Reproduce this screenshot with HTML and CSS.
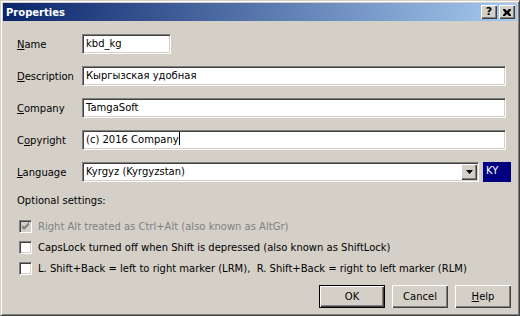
FILE: index.html
```html
<!DOCTYPE html>
<html lang="en">
<head>
    <meta charset="UTF-8">
    <title>Properties</title>
    <link rel="stylesheet" href="styles.css">
</head>
<body>

    <div class="window">
        <div class="titlebar">
            <span class="title">Properties</span>
            <div class="title-buttons">
                <span class="tbtn help-btn">?</span>
                <span class="tbtn close-btn">
                    <svg width="8" height="7" viewBox="0 0 8 7">
                        <path d="M0 0h2l2 2l2 -2h2v1l-2 2.5l2 2.5v1h-2l-2 -2l-2 2h-2v-1l2 -2.5l-2 -2.5z" fill="#000"/>
                    </svg>
                </span>
            </div>
        </div>

        <div class="content">
            <div class="row">
                <span class="lbl"><u>N</u>ame</span>
                <div class="field name-field">kbd_kg</div>
            </div>
            <div class="row">
                <span class="lbl"><u>D</u>escription</span>
                <div class="field">Кыргызская удобная</div>
            </div>
            <div class="row">
                <span class="lbl"><u>C</u>ompany</span>
                <div class="field">TamgaSoft</div>
            </div>
            <div class="row">
                <span class="lbl">C<u>o</u>pyright</span>
                <div class="field">(c) 2016 Company<span class="caret"></span></div>
            </div>
            <div class="row">
                <span class="lbl"><u>L</u>anguage</span>
                <div class="combo">
                    <span class="combo-text">Kyrgyz (Kyrgyzstan)</span>
                    <span class="combo-btn">
                        <svg width="7" height="4" viewBox="0 0 7 4"><path d="M0 0h7l-3.5 4z" fill="#000"/></svg>
                    </span>
                </div>
                <span class="lang-code">KY</span>
            </div>

            <div class="section">Optional settings:</div>

            <div class="check disabled">
                <span class="box">
                    <svg width="9" height="9" viewBox="0 0 9 9"><path d="M1 3v3l2 2l5 -5v-3l-5 5z" fill="#808080"/></svg>
                </span>
                Right Alt treated as Ctrl+Alt (also known as AltGr)
            </div>
            <div class="check">
                <span class="box"></span>
                CapsLock turned off when Shift is depressed (also known as ShiftLock)
            </div>
            <div class="check">
                <span class="box"></span>
                L. Shift+Back = left to right marker (LRM),&nbsp; R. Shift+Back = right to left marker (RLM)
            </div>

            <div class="actions">
                <button class="btn default">OK</button>
                <button class="btn">Cancel</button>
                <button class="btn"><u>H</u>elp</button>
            </div>
        </div>
    </div>

</body>
</html>
```

FILE: styles.css
```css
body {
    margin: 0;
    background-color: #d4d0c8;
    font-family: "DejaVu Sans", Tahoma, sans-serif;
    font-size: 10px;
    color: #000;
}

.window {
    width: 520px;
    height: 316px;
    box-sizing: border-box;
    border: 1px solid;
    border-color: #d4d0c8 #404040 #404040 #d4d0c8;
    box-shadow: inset 1px 1px #fff, inset -1px -1px #808080;
    padding: 2px;
    background-color: #d4d0c8;
}

.titlebar {
    height: 18px;
    display: flex;
    align-items: center;
    justify-content: space-between;
    background: linear-gradient(to right, #0a246a, #a6caf0);
}

.title {
    color: #fff;
    font-weight: bold;
    padding-left: 3px;
}

.title-buttons {
    display: flex;
    gap: 2px;
    margin-right: 2px;
}

.tbtn {
    width: 16px;
    height: 14px;
    box-sizing: border-box;
    background-color: #d4d0c8;
    box-shadow: inset 1px 1px #fff, inset -1px -1px #404040, inset -2px -2px #808080;
    display: flex;
    align-items: center;
    justify-content: center;
}

.help-btn {
    font-weight: bold;
    font-size: 11px;
    line-height: 14px;
    padding-bottom: 1px;
}

.content {
    padding: 13px 6px 0 14px;
}

.row {
    display: flex;
    align-items: center;
    height: 20px;
    margin-bottom: 12px;
}

.lbl {
    width: 65px;
    flex-shrink: 0;
}

.field,
.combo {
    height: 20px;
    box-sizing: border-box;
    background-color: #fff;
    border: 1px solid;
    border-color: #808080 #fff #fff #808080;
    box-shadow: inset 1px 1px #404040, inset -1px -1px #d4d0c8;
    padding: 0 3px;
    line-height: 18px;
    white-space: nowrap;
}

.field {
    width: 424px;
}

.name-field {
    width: 89px;
}

.caret {
    display: inline-block;
    width: 1px;
    height: 13px;
    background-color: #000;
    vertical-align: -2px;
}

.combo {
    width: 397px;
    display: flex;
    align-items: center;
    justify-content: space-between;
    padding-right: 1px;
}

.combo-btn {
    width: 16px;
    height: 16px;
    box-sizing: border-box;
    background-color: #d4d0c8;
    box-shadow: inset 1px 1px #fff, inset -1px -1px #404040, inset -2px -2px #808080;
    display: flex;
    align-items: center;
    justify-content: center;
}

.lang-code {
    margin-left: 4px;
    width: 28px;
    height: 20px;
    box-sizing: border-box;
    background-color: #000080;
    color: #fff;
    padding: 2px 0 0 3px;
    line-height: 13px;
}

.section {
    line-height: 13px;
}

.check {
    display: flex;
    align-items: center;
    gap: 6px;
    height: 13px;
    margin-top: 8px;
    padding-left: 2px;
    white-space: nowrap;
}

.section + .check {
    margin-top: 13px;
}

.box {
    width: 13px;
    height: 13px;
    box-sizing: border-box;
    background-color: #fff;
    border: 1px solid;
    border-color: #808080 #fff #fff #808080;
    box-shadow: inset 1px 1px #404040, inset -1px -1px #d4d0c8;
    display: flex;
    align-items: center;
    justify-content: center;
    flex-shrink: 0;
}

.check.disabled {
    color: #808080;
}

.check.disabled .box {
    background-color: #d4d0c8;
}

.actions {
    display: flex;
    justify-content: flex-end;
    gap: 7px;
    margin-top: 10px;
}

.btn {
    font-family: inherit;
    font-size: 10px;
    width: 56px;
    height: 23px;
    padding: 0;
    background-color: #d4d0c8;
    border: none;
    box-shadow: inset 1px 1px #fff, inset -1px -1px #404040, inset -2px -2px #808080;
    color: #000;
}

.btn.default {
    width: 66px;
    border: 1px solid #000;
}
```
